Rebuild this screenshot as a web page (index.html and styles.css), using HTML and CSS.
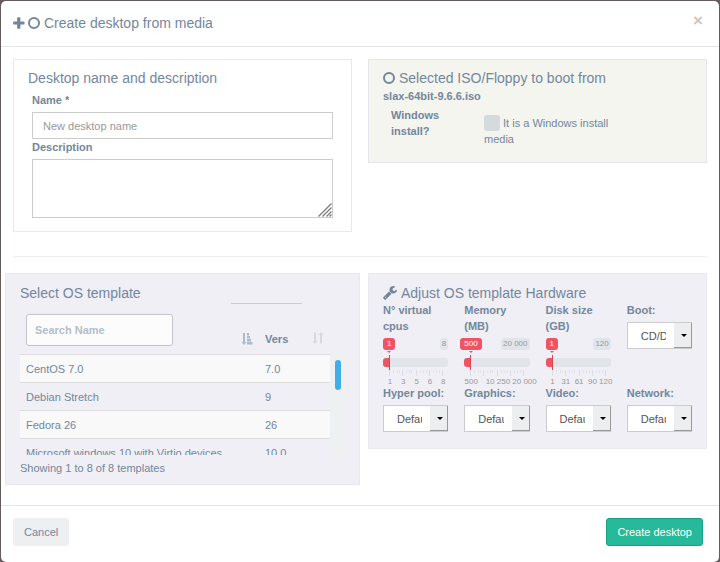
FILE: index.html
```html
<!DOCTYPE html>
<html lang="en">
<head>
<meta charset="utf-8">
<meta name="viewport" content="width=device-width, initial-scale=1">
<title>Create desktop from media</title>
<link rel="stylesheet" href="styles.css">
</head>
<body>
<svg class="defs" aria-hidden="true">
  <symbol id="circle" viewBox="0 0 12 12"><circle cx="6" cy="6" r="5" fill="none" stroke="currentColor" stroke-width="2"/></symbol>
  <symbol id="plus" viewBox="0 0 12 12"><path d="M4.800 .3h1.900a.7.7 0 0 1 .7.7v3.400h3.400a.7.7 0 0 1 .7.7v1.800a.7.7 0 0 1-.7.7H7.400v3.400a.7.7 0 0 1-.7.7H4.800a.7.7 0 0 1-.7-.7V7.600H.8a.7.7 0 0 1-.7-.7V5.100a.7.7 0 0 1 .7-.7h3.300V1a.7.7 0 0 1 .7-.7z" fill="currentColor"/></symbol>
  <symbol id="wrench" viewBox="0 0 1664 1664"><path d="M384 1344q0-26-19-45t-45-19-45 19-19 45 19 45 45 19 45-19 19-45zm644-420l-682 682q-37 37-90 37-52 0-91-37L59 1498q-38-36-38-90 0-53 38-91l681-681q39 98 114.500 173.500T1028 924zm634-435q0 39-23 106-47 134-164.500 217.500T1216 896q-185 0-316.500-131.500T768 448t131.500-316.500T1216 0q58 0 121.500 16.500T1445 63q16 11 16 28t-16 28l-293 169v224l193 107q5-3 79-48.500t135.500-81T1630 454q15 0 23.500 10t8.500 25z" fill="currentColor"/></symbol>
  <symbol id="sort-asc" viewBox="0 0 12 12"><path d="M2 0h2v9h1.500L3 12 .5 9H2zM6 0h2v2.500H6zM6 3h3v2.500H6zM6 6h4v2.500H6zM6 9h5.500v2.500H6z" fill="currentColor"/></symbol>
  <symbol id="sort-both" viewBox="0 0 12 12"><path d="M2 .5h2v8.500h1.500L3 12 .5 9H2zM8 11.500h2V3h1.500L9 0 6.500 3H8z" fill="currentColor"/></symbol>
  <symbol id="ticks" viewBox="0 0 65 6"><path d="M6.500 0v6M19.500 0v6M33.500 0v6M46.500 0v6M59.500 0v6" stroke="#dadde2" fill="none"/><path d="M10.500 0v3M14.500 0v3M16.500 0v3M23.500 0v3M26.500 0v3M28.500 0v3M37.500 0v3M40.500 0v3M43.500 0v3M50.500 0v3M53.500 0v3M56.500 0v3" stroke="#e2e4e9" fill="none"/></symbol>
  <symbol id="grip" viewBox="0 0 14 14"><path d="M.5 13.500l13-13M4.500 13.500l9-9M8.500 13.500l5-5M11.500 13.500l2-2" stroke="#777" stroke-width="1.200" fill="none"/></symbol>
</svg>
<div class="modal" role="dialog" aria-labelledby="title">
  <header class="modal-header">
    <h1 class="heading" id="title"><svg class="icon"><use href="#plus"/></svg><svg class="icon"><use href="#circle"/></svg><span>Create desktop from media</span></h1>
    <button class="close" type="button" aria-label="Close">×</button>
  </header>
  <main class="modal-body">
    <div class="columns">
      <section class="panel">
        <h2 class="heading">Desktop name and description</h2>
        <div class="fields">
          <label class="label" for="name">Name *</label>
          <input class="text-input" id="name" type="text" placeholder="New desktop name">
          <label class="label" for="description">Description</label>
          <div class="area">
            <textarea class="text-area" id="description"></textarea>
            <svg class="grip"><use href="#grip"/></svg>
          </div>
        </div>
      </section>
      <section class="panel panel-media">
        <h2 class="heading"><svg class="icon"><use href="#circle"/></svg><span>Selected ISO/Floppy to boot from</span></h2>
        <div class="label">slax-64bit-9.6.6.iso</div>
        <div class="windows">
          <div class="label">Windows install?</div>
          <div class="check-line"><input class="check" id="windows" type="checkbox"> <label for="windows">It is a Windows install media</label></div>
        </div>
      </section>
    </div>
    <hr class="rule">
    <div class="columns">
      <section class="panel panel-tint panel-wide">
        <h2 class="heading">Select OS template</h2>
        <div class="list">
          <div class="table-clip">
            <table class="table">
              <thead>
                <tr>
                  <th class="col-name"><div class="head-cell"><input class="search" type="text" placeholder="Search Name" aria-label="Search Name"><svg class="icon sort"><use href="#sort-asc"/></svg></div></th>
                  <th class="col-vers"><span class="cut-line"></span><div class="head-cell"><span>Vers</span><svg class="icon sort sort-off"><use href="#sort-both"/></svg></div></th>
                </tr>
              </thead>
              <tbody>
                <tr><td>CentOS 7.0</td><td>7.0</td></tr>
                <tr><td>Debian Stretch</td><td>9</td></tr>
                <tr><td>Fedora 26</td><td>26</td></tr>
                <tr><td>Microsoft windows 10 with Virtio devices</td><td>10.0</td></tr>
              </tbody>
            </table>
          </div>
          <div class="track"><div class="thumb"></div></div>
        </div>
        <p class="summary">Showing 1 to 8 of 8 templates</p>
      </section>
      <section class="panel panel-tint">
        <h2 class="heading"><svg class="icon icon-wrench"><use href="#wrench"/></svg><span>Adjust OS template Hardware</span></h2>
        <div class="hardware">
          <div class="control">
            <label class="label" for="cpus">N° virtual cpus</label>
            <div class="slider">
              <div class="pills"><span class="pill pill-on">1</span><span class="pill">8</span></div>
              <input class="range" id="cpus" type="range" min="1" max="8" value="1">
              <svg class="ticks"><use href="#ticks"/></svg>
              <div class="scale"><span>1</span><span>3</span><span>5</span><span>6</span><span>8</span></div>
            </div>
          </div>
          <div class="control">
            <label class="label" for="memory">Memory (MB)</label>
            <div class="slider">
              <div class="pills"><span class="pill pill-on pill-long">500</span><span class="pill">20 000</span></div>
              <input class="range" id="memory" type="range" min="500" max="20000" value="500">
              <svg class="ticks"><use href="#ticks"/></svg>
              <div class="scale"><span>500</span><span>10 250</span><span>20 000</span></div>
            </div>
          </div>
          <div class="control">
            <label class="label" for="disk">Disk size (GB)</label>
            <div class="slider">
              <div class="pills"><span class="pill pill-on">1</span><span class="pill">120</span></div>
              <input class="range" id="disk" type="range" min="1" max="120" value="1">
              <svg class="ticks"><use href="#ticks"/></svg>
              <div class="scale"><span>1</span><span>31</span><span>61</span><span>90</span><span>120</span></div>
            </div>
          </div>
          <div class="control">
            <label class="label" for="boot">Boot:</label>
            <div class="select"><select id="boot"><option>CD/DVD</option></select></div>
          </div>
          <div class="control">
            <label class="label" for="pool">Hyper pool:</label>
            <div class="select"><select id="pool"><option>Default</option></select></div>
          </div>
          <div class="control">
            <label class="label" for="graphics">Graphics:</label>
            <div class="select"><select id="graphics"><option>Default</option></select></div>
          </div>
          <div class="control">
            <label class="label" for="video">Video:</label>
            <div class="select"><select id="video"><option>Default</option></select></div>
          </div>
          <div class="control">
            <label class="label" for="network">Network:</label>
            <div class="select"><select id="network"><option>Default</option></select></div>
          </div>
        </div>
      </section>
    </div>
  </main>
  <footer class="modal-footer">
    <button class="button" type="button">Cancel</button>
    <button class="button button-primary" type="button">Create desktop</button>
  </footer>
</div>
</body>
</html>
```
FILE: styles.css
```css
* { box-sizing: border-box; }

body {
  margin: 0;
  padding: 1px 1px 0;
  background: #665c5e;
  color: #73879c;
  font: 11px/16px "Liberation Sans", Arial, sans-serif;
}

input, textarea, select, button { font: inherit; color: inherit; margin: 0; }

.defs { position: absolute; width: 0; height: 0; }

.modal { background: #fff; border-radius: 5px; }

.modal-header {
  display: flex;
  justify-content: space-between;
  align-items: flex-start;
  padding: 12px 16px 13px 12px;
  border-bottom: 1px solid #e5e5e5;
}

.heading {
  display: flex;
  align-items: center;
  gap: 3px;
  margin: 0;
  font-size: 14px;
  font-weight: 400;
  line-height: 20px;
}
.heading .icon + span { margin-left: 1px; }

.icon { width: 12px; height: 12px; flex: none; }
.icon-wrench { width: 14px; height: 14px; }

.close {
  padding: 0;
  border: 0;
  background: none;
  color: #c8c8c8;
  font-size: 17px;
  font-weight: 700;
  line-height: 16px;
}

.modal-body { padding: 12px 12px 20px; }

.columns {
  display: grid;
  grid-template-columns: repeat(2, minmax(0, 1fr));
  gap: 16px;
  align-items: start;
}

.panel { padding: 8px 14px 13px; border: 1px solid #e6e9ed; }
.panel-media { background: #f4f5ef; border-color: #e4e5ed; padding-bottom: 15px; }
.panel-tint { background: #f0eff5; padding-top: 10px; padding-bottom: 16px; }
.panel-tint .heading { line-height: 18px; }
.panel-wide { margin: 0 -8px; padding-bottom: 8px; }

.label { display: block; font-weight: 700; }

.fields { padding: 4px 4px 0; }

.text-input, .text-area {
  display: block;
  width: 100%;
  border: 1px solid #ccc;
  border-radius: 0;
  background: #fff;
}
.text-input { height: 27px; margin-top: 4px; padding: 0 10px; }
.text-input::placeholder { color: #999; }
.area { position: relative; margin-top: 4px; }
.text-area { height: 59px; resize: none; }
.grip { position: absolute; right: 1px; bottom: 1px; width: 14px; height: 14px; }

.windows {
  display: grid;
  grid-template-columns: 65px 130px;
  gap: 28px;
  padding: 3px 8px 0;
}
.check-line { padding-top: 8px; }
.check {
  appearance: none;
  width: 16px;
  height: 16px;
  border-radius: 3px;
  background: #d5dadd;
  vertical-align: top;
}

.rule { margin: 24px 0 16px; border: 0; border-top: 1px solid #eee; }

.list { display: flex; height: 153px; }
.table-clip { flex: 1; overflow: hidden; }
.table { width: 100%; border-collapse: collapse; table-layout: fixed; }
.table th, .table td { padding: 0 6px; text-align: left; white-space: nowrap; }
.table th { position: relative; height: 52px; padding-top: 5px; }
.table td { height: 28px; padding-top: 1px; border-top: 1px solid #ddd; }
.table tbody tr:nth-child(odd) { background: #f9f9f9; }
.col-vers { width: 71px; }
.head-cell { display: flex; align-items: flex-end; justify-content: space-between; }
.col-vers .head-cell { align-items: center; padding-top: 17px; }
.search {
  width: 147px;
  height: 32px;
  padding: 0 8px;
  border: 1px solid #c4c4c8;
  border-radius: 3px;
  background: #fcfcfc;
  font-weight: 700;
}
.search::placeholder { color: #b3becb; }
.sort { margin-bottom: 1px; opacity: 0.5; }
.sort-off { opacity: 0.2; }
.cut-line { position: absolute; top: 1px; right: 28px; width: 71px; border-top: 1px solid #ccc; }
.track { width: 15px; margin: 52px 0 0; padding: 6px 4px 6px 5px; background: #eef0f1; }
.thumb { width: 6px; height: 30px; border-radius: 3px; background: #41aeea; }
.summary { margin: 5px 0 0; }

.hardware {
  display: grid;
  grid-template-columns: repeat(4, minmax(0, 1fr));
  column-gap: 16px;
}

.slider { padding-top: 4px; font-size: 8px; line-height: 12px; white-space: nowrap; }
.pills { display: flex; justify-content: space-between; }
.pill { padding: 0 2px; border-radius: 3px; background: #e1e4e9; color: #999; }
.pill-on { position: relative; padding: 0 4px; background: #ed5565; color: #fff; }
.pill-on::after {
  content: "";
  position: absolute;
  left: calc(50% - 2px);
  top: 13px;
  border: 2px solid transparent;
  border-top-color: #ed5565;
  border-bottom: 0;
}
.pill-long { margin-left: -4px; }
.range {
  appearance: none;
  display: block;
  width: 100%;
  height: 9px;
  margin-top: 8px;
  padding: 0 6px;
  border-radius: 3px;
  background: linear-gradient(90deg, #ed5565 7px, #e1e4e9 7px);
}
.range::-webkit-slider-thumb {
  appearance: none;
  width: 1px;
  height: 15px;
  background: #da4453;
}
.ticks { display: block; width: 65px; height: 6px; margin-top: 3px; }
.scale {
  display: flex;
  justify-content: space-between;
  height: 9px;
  padding: 0 5px 0 7px;
  color: #999;
}
.scale span { display: flex; justify-content: center; width: 0; }

.select { position: relative; margin-top: 4px; }
.select select {
  appearance: none;
  display: block;
  width: 100%;
  height: 27px;
  padding: 0 25px 0 13px;
  border: 1px solid #ccc;
  border-radius: 0;
  background: #fff;
  color: #555;
}
.select::before {
  content: "";
  position: absolute;
  top: 1px;
  right: 0;
  bottom: 1px;
  width: 17px;
  border-right: 1px solid #999;
  border-bottom: 1px solid #999;
  background: #eceef0;
  pointer-events: none;
}
.select::after {
  content: "";
  position: absolute;
  top: 12px;
  right: 5px;
  border: 3px solid transparent;
  border-top-color: #000;
  border-bottom: 0;
  pointer-events: none;
}

.modal-footer {
  display: flex;
  justify-content: space-between;
  padding: 12px 16px 16px 12px;
  border-top: 1px solid #e5e5e5;
}
.button {
  height: 28px;
  padding: 0 10px;
  border: 1px solid #edeff1;
  border-radius: 3px;
  background: #edeff1;
}
.button-primary { border-color: #169f85; background: #26b99a; color: #fff; }
```
